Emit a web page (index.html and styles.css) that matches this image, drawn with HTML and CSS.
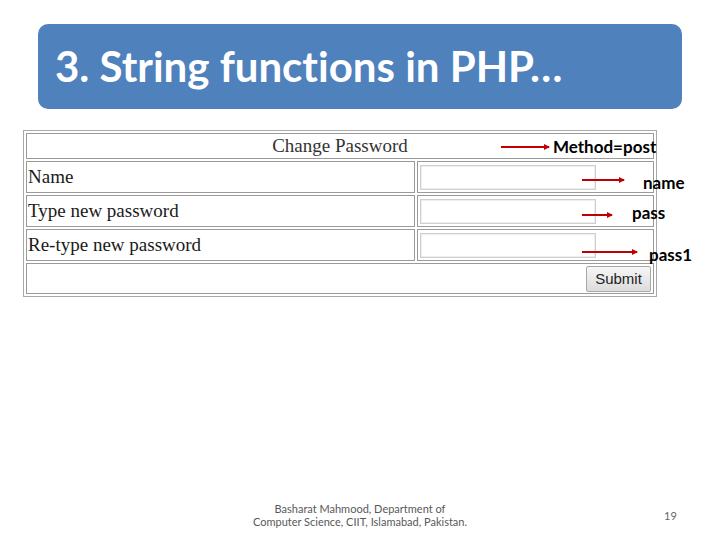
FILE: index.html
```html
<!DOCTYPE html>
<html>
<head>
<meta charset="utf-8">
<link rel="stylesheet" href="styles.css">
</head>
<body>
<div class="slide">
  <header class="title">3. String functions in PHP…</header>
  <div class="figure">
    <table class="form">
      <colgroup><col class="c1"><col class="c2"></colgroup>
      <tr><th colspan="2" class="head">Change Password</th></tr>
      <tr><td class="label">Name</td><td class="field"><span class="input"></span></td></tr>
      <tr><td class="label">Type new password</td><td class="field"><span class="input"></span></td></tr>
      <tr><td class="label">Re-type new password</td><td class="field"><span class="input"></span></td></tr>
      <tr><td colspan="2" class="actions"><span class="btn">Submit</span></td></tr>
    </table>
    <span class="arrow ar-method"></span><span class="tag t-method">Method=post</span>
    <span class="arrow ar-name"></span><span class="tag t-name">name</span>
    <span class="arrow ar-pass"></span><span class="tag t-pass">pass</span>
    <span class="arrow ar-pass1"></span><span class="tag t-pass1">pass1</span>
  </div>
  <footer class="foot">
    <div class="credit">Basharat Mahmood, Department of<br>Computer Science, CIIT, Islamabad, Pakistan.</div>
    <div class="page">19</div>
  </footer>
</div>
</body>
</html>
```
FILE: styles.css
```css
html, body {
  margin: 0;
  padding: 0;
  background: #ffffff;
}
.slide {
  width: 720px;
  height: 540px;
  position: relative;
  display: flex;
  flex-direction: column;
  overflow: hidden;
}
.title {
  margin: 24px 0 0 38px;
  width: 627px;
  height: 85px;
  padding-left: 17px;
  background: #4f81bd;
  border-radius: 10px;
  color: #ffffff;
  font-family: Lato, "Liberation Sans", sans-serif;
  font-weight: 700;
  font-size: 42px;
  font-variant-ligatures: none;
  line-height: 85px;
  box-sizing: content-box;
}
.figure {
  position: relative;
  margin-top: 21px;
  height: 170px;
}
.form {
  margin-left: 23px;
  width: 634px;
  border: 1px solid #a9a9a9;
  border-spacing: 2px;
  font-family: "Liberation Serif", "Times New Roman", serif;
  font-size: 19px;
  color: #1a1a1a;
  table-layout: fixed;
}
.c1 { width: 389px; }
.form td, .form th {
  border: 1px solid #9a9a9a;
  padding: 0 1px;
}
.head {
  height: 24px;
  font-weight: normal;
  text-align: center;
  color: #333;
}
.label {
  height: 30px;
  text-align: left;
}
.field {
  height: 30px;
  padding: 0 2px !important;
}
.input {
  display: block;
  width: 174px;
  height: 23px;
  border: 1px solid #cfcfcf;
  box-shadow: inset 0 0 0 1px #eeeeee;
}
.actions {
  height: 29px;
  text-align: right;
  padding: 0 2px !important;
}
.btn {
  display: inline-block;
  width: 63px;
  height: 24px;
  line-height: 24px;
  text-align: center;
  border: 1px solid #a8a8a8;
  border-radius: 2px;
  background: linear-gradient(#f6f6f6, #dcdcdc);
  font-family: "Liberation Sans", Arial, sans-serif;
  font-size: 15px;
  color: #222;
  vertical-align: middle;
}
.arrow {
  position: absolute;
  display: block;
  height: 2px;
  background: #c00000;
}
.arrow::after {
  content: "";
  position: absolute;
  right: -1px;
  top: -2px;
  border-left: 6px solid #c00000;
  border-top: 3px solid transparent;
  border-bottom: 3px solid transparent;
}
.ar-method { left: 501px; width: 48px; top: 16px; }
.ar-name { left: 582px; width: 42px; top: 49px; }
.ar-pass { left: 582px; width: 30px; top: 84px; }
.ar-pass1 { left: 582px; width: 55px; top: 121px; }
.tag {
  position: absolute;
  font-family: Lato, "Liberation Sans", sans-serif;
  font-weight: 700;
  font-size: 17px;
  line-height: 20px;
  color: #000;
}
.t-method { left: 553px; top: 7px; }
.t-name { left: 643px; top: 43px; }
.t-pass { left: 632px; top: 73px; }
.t-pass1 { left: 649px; top: 115px; }
.foot {
  margin-top: auto;
  height: 44px;
  position: relative;
  display: flex;
  justify-content: center;
  font-family: Lato, "Liberation Sans", sans-serif;
  color: #595959;
}
.credit {
  margin-top: 6px;
  text-align: center;
  font-size: 11px;
  line-height: 13px;
}
.page {
  position: absolute;
  left: 664px;
  top: 13px;
  font-size: 11px;
  color: #666;
}
```
